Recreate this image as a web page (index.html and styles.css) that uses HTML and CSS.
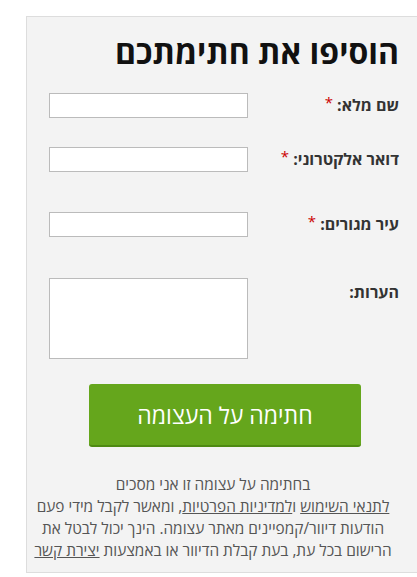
FILE: index.html
```html
<!DOCTYPE html>
<html lang="he">
<head>
<meta charset="utf-8">
<link rel="stylesheet" href="styles.css">
</head>
<body>
<div class="panel" dir="rtl">
  <h1 class="title">הוסיפו את חתימתכם</h1>
  <form class="form">
    <div class="row row-name">
      <label class="label">שם מלא: <span class="req">*</span></label>
      <input class="field" type="text">
    </div>
    <div class="row row-email">
      <label class="label">דואר אלקטרוני: <span class="req">*</span></label>
      <input class="field" type="text">
    </div>
    <div class="row row-city">
      <label class="label">עיר מגורים: <span class="req">*</span></label>
      <input class="field" type="text">
    </div>
    <div class="row row-notes">
      <label class="label">הערות:</label>
      <textarea class="field area"></textarea>
    </div>
    <div class="actions">
      <button class="submit" type="button">חתימה על העצומה</button>
    </div>
  </form>
  <p class="terms">בחתימה על עצומה זו אני מסכים<br><a href="#">לתנאי השימוש</a> ו<a href="#">למדיניות הפרטיות</a>, ומאשר לקבל מידי פעם<br>הודעות דיוור/קמפיינים מאתר עצומה. הינך יכול לבטל את<br>הרישום בכל עת, בעת קבלת הדיוור או באמצעות <a href="#">יצירת קשר</a></p>
</div>
</body>
</html>
```
FILE: styles.css
```css
html, body {
  margin: 0;
  padding: 0;
  background: #fff;
  overflow: hidden;
}
body {
  font-family: "Open Sans", "DejaVu Sans", sans-serif;
  color: #333;
  width: 417px;
  height: 577px;
}
.panel {
  box-sizing: border-box;
  width: 400px;
  height: 557px;
  margin: 16px 0 0 26px;
  background: #f3f3f3;
  border: 1px solid #ddd;
  padding: 13px 26px 0 22px;
}
.title {
  margin: 0;
  font-size: 32px;
  font-weight: 700;
  color: #111;
  line-height: 44px;
}
.form {
  margin-top: 19px;
}
.row {
  display: flex;
  justify-content: space-between;
  align-items: flex-start;
  height: 25px;
}
.row-email { margin-top: 29px; }
.row-city { margin-top: 40px; }
.row-notes { margin-top: 41px; height: 81px; }
.label {
  font-size: 16px;
  font-weight: 700;
  color: #333;
  line-height: 24px;
  white-space: nowrap;
}
.row-notes .label { margin-top: 2px; }
.req {
  color: #c00;
  font-weight: 400;
  font-size: 15px;
  line-height: 0;
  vertical-align: 3px;
}
.field {
  box-sizing: border-box;
  width: 199px;
  height: 25px;
  margin: 0;
  border: 1px solid #bbb;
  background: #fff;
  border-radius: 0;
  padding: 0;
  flex: none;
}
.area {
  height: 81px;
  resize: none;
}
.actions {
  display: flex;
  justify-content: center;
  margin-top: 25px;
  padding-left: 2px;
}
.submit {
  width: 272px;
  height: 63px;
  background: #65a61c;
  border: none;
  border-bottom: 2px solid #4e8a12;
  border-radius: 3px;
  color: #fff;
  font-family: "Open Sans", "DejaVu Sans", sans-serif;
  font-size: 23px;
  cursor: pointer;
}
.terms {
  margin: 27px 2px 0 -20px;
  text-align: center;
  font-size: 15.4px;
  line-height: 22px;
  color: #555;
  white-space: nowrap;
}
.terms a {
  color: #555;
  text-decoration: underline;
}
```
